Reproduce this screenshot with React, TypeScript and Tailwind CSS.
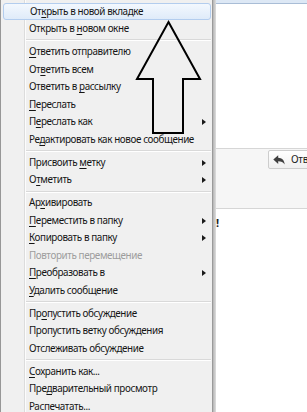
import React from "react";

type Entry =
  | { t: "i"; label: string; u?: number; sub?: boolean; hl?: boolean; dis?: boolean }
  | { t: "s" };

const entries: Entry[] = [
  { t: "i", label: "Открыть в новой вкладке", u: 2, hl: true },
  { t: "i", label: "Открыть в новом окне", u: 10 },
  { t: "s" },
  { t: "i", label: "Ответить отправителю", u: 0 },
  { t: "i", label: "Ответить всем", u: 2 },
  { t: "i", label: "Ответить в рассылку", u: 11 },
  { t: "i", label: "Переслать", u: 0 },
  { t: "i", label: "Переслать как", u: 1, sub: true },
  { t: "i", label: "Редактировать как новое сообщение", u: 2 },
  { t: "s" },
  { t: "i", label: "Присвоить метку", u: 10, sub: true },
  { t: "i", label: "Отметить", u: 1, sub: true },
  { t: "s" },
  { t: "i", label: "Архивировать", u: 2 },
  { t: "i", label: "Переместить в папку", u: 0, sub: true },
  { t: "i", label: "Копировать в папку", u: 0, sub: true },
  { t: "i", label: "Повторить перемещение", dis: true },
  { t: "i", label: "Преобразовать в", u: 0, sub: true },
  { t: "i", label: "Удалить сообщение", u: 0 },
  { t: "s" },
  { t: "i", label: "Пропустить обсуждение", u: 2 },
  { t: "i", label: "Пропустить ветку обсуждения" },
  { t: "i", label: "Отслеживать обсуждение" },
  { t: "s" },
  { t: "i", label: "Сохранить как...", u: 0 },
  { t: "i", label: "Предварительный просмотр", u: 3 },
  { t: "i", label: "Распечатать...", u: 3 },
];

function Label({ label, u }: { label: string; u?: number }) {
  if (u === undefined) return <span className="whitespace-nowrap">{label}</span>;
  return (
    <span className="whitespace-nowrap">
      {label.slice(0, u)}
      <span className="underline underline-offset-[1.5px] decoration-[1px]">{label[u]}</span>
      {label.slice(u + 1)}
    </span>
  );
}

export default function App() {
  return (
    <div
      className="relative flex h-[412px] w-[307px] overflow-hidden bg-white"
      style={{ fontFamily: '"Noto Sans", "Liberation Sans", sans-serif' }}
    >
      {/* menu */}
      <div className="w-[212px] shrink-0 border-l border-[#979797] bg-[#f0f0f0] bg-[linear-gradient(to_right,#f0f0f0_23px,#dcdcdc_23px,#dcdcdc_24px,#fcfcfc_24px,#fcfcfc_25px,#f0f0f0_25px)] pt-[2.7px]">
        {entries.map((e, i) =>
          e.t === "s" ? (
            <div key={i} className="ml-[25px] mr-[1px] flex h-[5.2px] flex-col justify-center">
              <div className="h-px bg-[#d9d9d9]" />
              <div className="h-px bg-white" />
            </div>
          ) : (
            <div
              key={i}
              className={
                "ml-[2px] mr-[1px] flex h-[17.6px] items-center justify-between pl-[26px] pr-[5px] text-[9.9px] leading-none tracking-[-0.4px] " +
                (e.dis ? "text-[#9d9d9d] " : "text-[#151515] ") +
                (e.hl
                  ? "rounded-[3px] border border-[#b3cdee] bg-[linear-gradient(to_bottom,#f3f8fe,#dfebf9)] pl-[25px] pr-[4px]"
                  : "")
              }
            >
              <Label label={e.label} u={e.u} />
              {e.sub && (
                <span className="h-0 w-0 shrink-0 border-y-[3.5px] border-l-[4px] border-y-transparent border-l-[#1a1a1a]" />
              )}
            </div>
          )
        )}
      </div>
      {/* menu border + shadow */}
      <div className="w-px shrink-0 bg-[#9a9a9a]" />
      <div className="w-[3px] shrink-0 bg-[linear-gradient(to_right,#b4b4b4,#dedede)]" />
      {/* background window */}
      <div className="flex min-w-0 flex-1 flex-col">
        <div className="box-content h-[3px] shrink-0 border-b border-[#a9bdd6] bg-[#dde8f5]" />
        <div className="h-[144px] shrink-0 bg-white" />
        <div className="flex h-[61px] shrink-0 flex-col border-y border-[#d6d6d6] bg-[#f6f6f6] pl-[52px] pt-px">
          <div className="flex h-[19px] w-[60px] items-center gap-[6px] rounded-[2px] border border-[#cdcdcd] bg-[linear-gradient(to_bottom,#ffffff,#f0f0f0)] pl-[4px] text-[10px] tracking-[-0.3px] text-[#222]">
            <svg width="12" height="10" viewBox="0 0 12 10" className="shrink-0">
              <path d="M0.3 4.6 L5.2 0.3 L5.2 2.8 C8.8 2.9 11.6 5.2 11.6 9.6 C10.3 7.3 8.2 6.3 5.2 6.3 L5.2 8.9 Z" fill="#404040" />
            </svg>
            <span className="whitespace-nowrap">Ответить</span>
          </div>
        </div>
        <div className="flex-1 bg-white pt-[7px] text-[11px] font-bold leading-[14px] text-[#222]">!</div>
      </div>
      {/* big arrow overlay */}
      <svg
        className="pointer-events-none absolute left-0 top-0"
        width="307"
        height="412"
        viewBox="0 0 307 412"
      >
        <polygon
          points="168.5,22 200,79 183,79 183,133 153,133 153,79 137,79"
          fill="none"
          stroke="#000"
          strokeWidth="2"
          strokeLinejoin="miter"
        />
      </svg>
    </div>
  );
}
